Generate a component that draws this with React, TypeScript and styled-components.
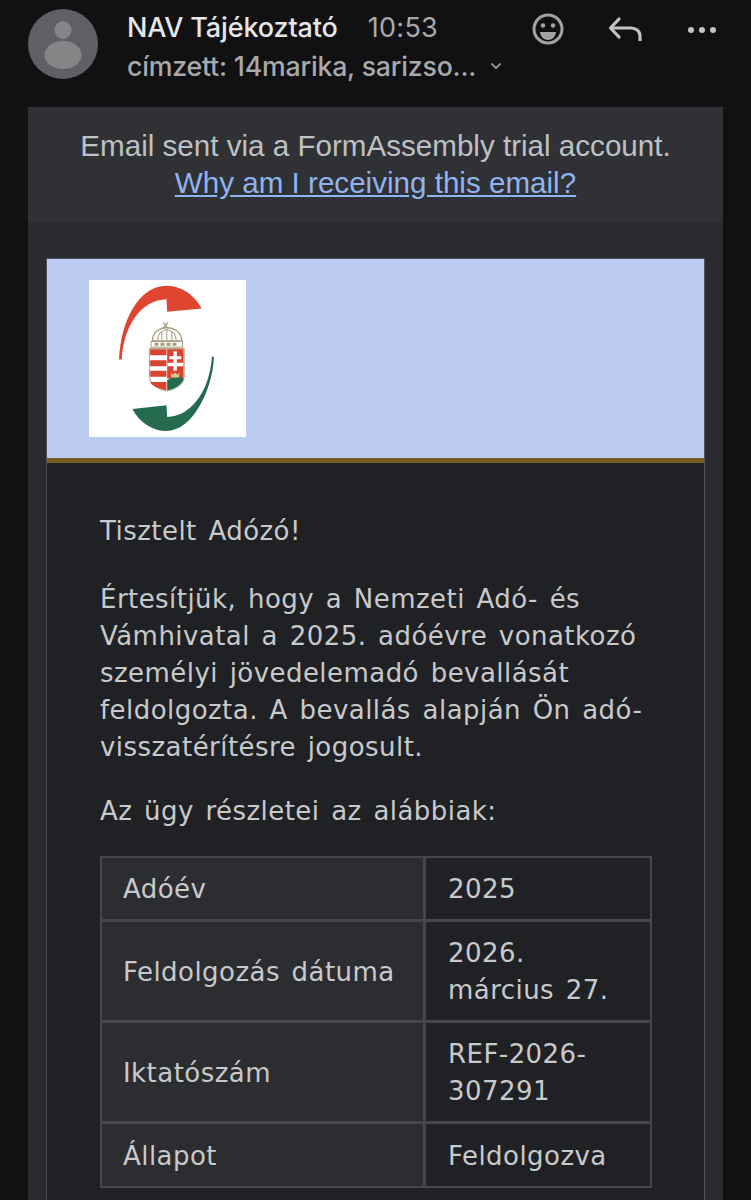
import React from "react";
import styled, { createGlobalStyle } from "styled-components";

const Global = createGlobalStyle`
  html, body { margin: 0; padding: 0; background: #111113; }
  body { height: 1200px; overflow: hidden; }
`;

const Page = styled.div`
  width: 751px;
  height: 1200px;
  overflow: hidden;
  background: #111113;
  padding: 0 28px;
  box-sizing: border-box;
`;

const Header = styled.header`
  display: flex;
  height: 107px;
  padding-top: 9px;
  box-sizing: border-box;
`;

const Avatar = styled.svg`
  width: 70px;
  height: 70px;
  flex: none;
  margin-right: 29px;
`;

const Sender = styled.div`
  width: 390px;
  flex: none;
  font-family: Inter, "Liberation Sans", sans-serif;
`;

const NameRow = styled.div`
  display: flex;
  align-items: baseline;
  gap: 30px;
  height: 38px;
  line-height: 38px;
`;

const Name = styled.span`
  font-size: 27px;
  font-weight: 500;
  color: #e6e6e7;
  letter-spacing: -0.15px;
`;

const Time = styled.span`
  font-size: 27px;
  color: #a9a9ab;
  letter-spacing: 0.3px;
`;

const ToRow = styled.div`
  display: flex;
  align-items: center;
  gap: 14px;
  height: 38px;
  font-size: 26.7px;
  font-weight: 500;
  color: #a9a9ab;
  letter-spacing: -0.2px;
  white-space: nowrap;
`;

const Actions = styled.div`
  display: flex;
  align-items: flex-start;
  margin-left: 13px;
  padding-top: 2px;
`;

const ActionIcon = styled.svg`
  width: 36px;
  height: 36px;
  flex: none;
  margin-right: 41px;
  &:last-child { margin-right: 0; }
`;

const Mail = styled.main`
  background: #2a2b2e;
  width: 695px;
  min-height: 1093px;
`;

const Notice = styled.div`
  background: #303134;
  height: 115px;
  padding-top: 20px;
  box-sizing: border-box;
  text-align: center;
  font-family: "Liberation Sans", Arial, sans-serif;
  font-size: 29.6px;
  line-height: 37px;
  color: #bdc1c6;
`;

const NoticeLink = styled.a`
  color: #8fb4ef;
  text-decoration: underline;
  display: block;
`;

const Card = styled.section`
  margin: 36px 18px 0;
  border: 1px solid #4c4f57;
  border-bottom: none;
  background: #202125;
`;

const Banner = styled.div`
  background: #bccbf1;
  height: 178px;
  padding: 21px 0 0 42px;
  border-bottom: 5px solid #7a5c25;
`;

const Logo = styled.svg`
  display: block;
  width: 157px;
  height: 157px;
`;

const Body = styled.div`
  padding: 50px 53px 40px;
  font-family: "DejaVu Sans", Verdana, sans-serif;
  font-size: 26px;
  letter-spacing: 0.45px;
  word-spacing: 3px;
  line-height: 37px;
  color: #c8c9cb;
`;

const Para = styled.p<{ $gap: number }>`
  margin: 0 0 ${(p) => p.$gap}px;
  white-space: nowrap;
`;

const DetailTable = styled.table`
  width: 552px;
  border: 2px solid #46474b;
  border-collapse: separate;
  border-spacing: 0;
  table-layout: fixed;
  margin-top: -4px;
`;

const Cell = styled.td<{ $label?: boolean }>`
  box-sizing: border-box;
  border-right: 3px solid #46474b;
  border-bottom: 3px solid #46474b;
  padding: 13px 21px 11px;
  background: ${(p) => (p.$label ? "#2c2d30" : "#202125")};
  width: ${(p) => (p.$label ? "324px" : "auto")};
  &:last-child { border-right: none; padding-left: 22px; }
  tr:last-child & { border-bottom: none; padding-top: 14px; padding-bottom: 11px; }
`;

const rows: [string, React.ReactNode][] = [
  ["Adóév", "2025"],
  ["Feldolgozás dátuma", <>2026.<br />március 27.</>],
  ["Iktatószám", <>REF-2026-<br />307291</>],
  ["Állapot", "Feldolgozva"],
];

export default function App() {
  return (
    <Page>
      <Global />
      <Header>
        <Avatar viewBox="0 0 70 70">
          <circle cx="35" cy="35" r="35" fill="#5f6063" />
          <ellipse cx="35" cy="21" rx="8.5" ry="9" fill="#848587" />
          <ellipse cx="35" cy="46" rx="18.5" ry="14" fill="#848587" />
        </Avatar>
        <Sender>
          <NameRow>
            <Name>NAV Tájékoztató</Name>
            <Time>10:53</Time>
          </NameRow>
          <ToRow>
            <span>címzett: 14marika, sarizso...</span>
            <svg width="12" height="8" viewBox="0 0 12 8" fill="none" stroke="#a9a9ab" strokeWidth="1.6">
              <path d="M1.5 1.5 6 6l4.500-4.500" />
            </svg>
          </ToRow>
        </Sender>
        <Actions>
          <ActionIcon viewBox="0 0 36 36">
            <circle cx="18" cy="18" r="14" fill="none" stroke="#a3a3a5" strokeWidth="3" />
            <circle cx="13" cy="14.500" r="2.200" fill="#a3a3a5" />
            <circle cx="23" cy="14.500" r="2.200" fill="#a3a3a5" />
            <path d="M10 21h16c-.5 5-4 8-8 8s-7.500-3-8-8z" fill="#a3a3a5" />
          </ActionIcon>
          <ActionIcon viewBox="0 0 36 36" fill="none" stroke="#c4c4c5" strokeWidth="3.200" strokeLinecap="round" strokeLinejoin="round">
            <path d="M12 8 3.500 17 12 26" />
            <path d="M4 17h20c5 0 9 3 9 8v5" strokeLinecap="butt" />
          </ActionIcon>
          <ActionIcon viewBox="0 0 36 36">
            <circle cx="7" cy="19" r="3" fill="#c4c4c5" />
            <circle cx="18" cy="19" r="3" fill="#c4c4c5" />
            <circle cx="29" cy="19" r="3" fill="#c4c4c5" />
          </ActionIcon>
        </Actions>
      </Header>
      <Mail>
        <Notice>
          Email sent via a FormAssembly trial account.
          <NoticeLink href="#">Why am I receiving this email?</NoticeLink>
        </Notice>
        <Card>
          <Banner>
            <Logo viewBox="0 0 470 470">
              <rect width="470" height="470" fill="#fff" />
              <path d="M90 238C95 120 150 17 232 17c48 0 88 33 105 68l-103 10-2-37c-72 2-127 72-134 180z" fill="#df4530" />
              <path d="M374 230c-4 100-64 222-142 222-42 0-82-27-102-66l102-11 2 35c66 0 126-70 134-180z" fill="#256b50" />
              <path d="M222 127l14 18m0-18-14 18" stroke="#a89c7e" strokeWidth="4" />
              <path d="M190 182c0-52 85-52 88 0z" fill="#fff" stroke="#a89c7e" strokeWidth="4" />
              <path d="M205 180c2-20 10-28 28-32 18 4 26 12 28 32M233 148v32M218 156v24M248 156v24" fill="none" stroke="#a89c7e" strokeWidth="3" />
              <rect x="186" y="184" width="94" height="17" fill="#fff" stroke="#a89c7e" strokeWidth="3" />
              <path d="M196 188h12v9h-12zm18 0h12v9h-12zm18 0h12v9h-12zm18 0h12v9h-12z" fill="#a89c7e" />
              <path d="M181 205h104v85c0 25-35 40-52 42-18-2-52-17-52-42z" fill="#fff" stroke="#b3a88c" strokeWidth="3" />
              <path d="M183 207h49v18h-49zm0 33h49v18h-49zm0 32h49v18h-49z" fill="#d8442f" />
              <path d="M183 305h49v25c-20-4-43-12-49-25z" fill="#d8442f" />
              <path d="M234 207h49v88h-49z" fill="#d8442f" />
              <path d="M234 330v-30c16-12 35-12 49-6-1 18-30 34-49 36z" fill="#256b50" />
              <path d="M253 213h10v15h13v9h-13v11h19v10h-19v14h-10v-14h-18v-10h18v-11h-13v-9h13z" fill="#fff" />
              <path d="M246 292v-14l6 6 6-7 6 7 6-6v14z" fill="#d9c88f" />
            </Logo>
          </Banner>
          <Body>
            <Para $gap={31}>Tisztelt Adózó!</Para>
            <Para $gap={27}>
              Értesítjük, hogy a Nemzeti Adó- és<br />
              Vámhivatal a 2025. adóévre vonatkozó<br />
              személyi jövedelemadó bevallását<br />
              feldolgozta. A bevallás alapján Ön adó-<br />
              visszatérítésre jogosult.
            </Para>
            <Para $gap={30}>Az ügy részletei az alábbiak:</Para>
            <DetailTable>
              <tbody>
                {rows.map(([k, v]) => (
                  <tr key={k}>
                    <Cell $label>{k}</Cell>
                    <Cell>{v}</Cell>
                  </tr>
                ))}
              </tbody>
            </DetailTable>
          </Body>
        </Card>
      </Mail>
    </Page>
  );
}
